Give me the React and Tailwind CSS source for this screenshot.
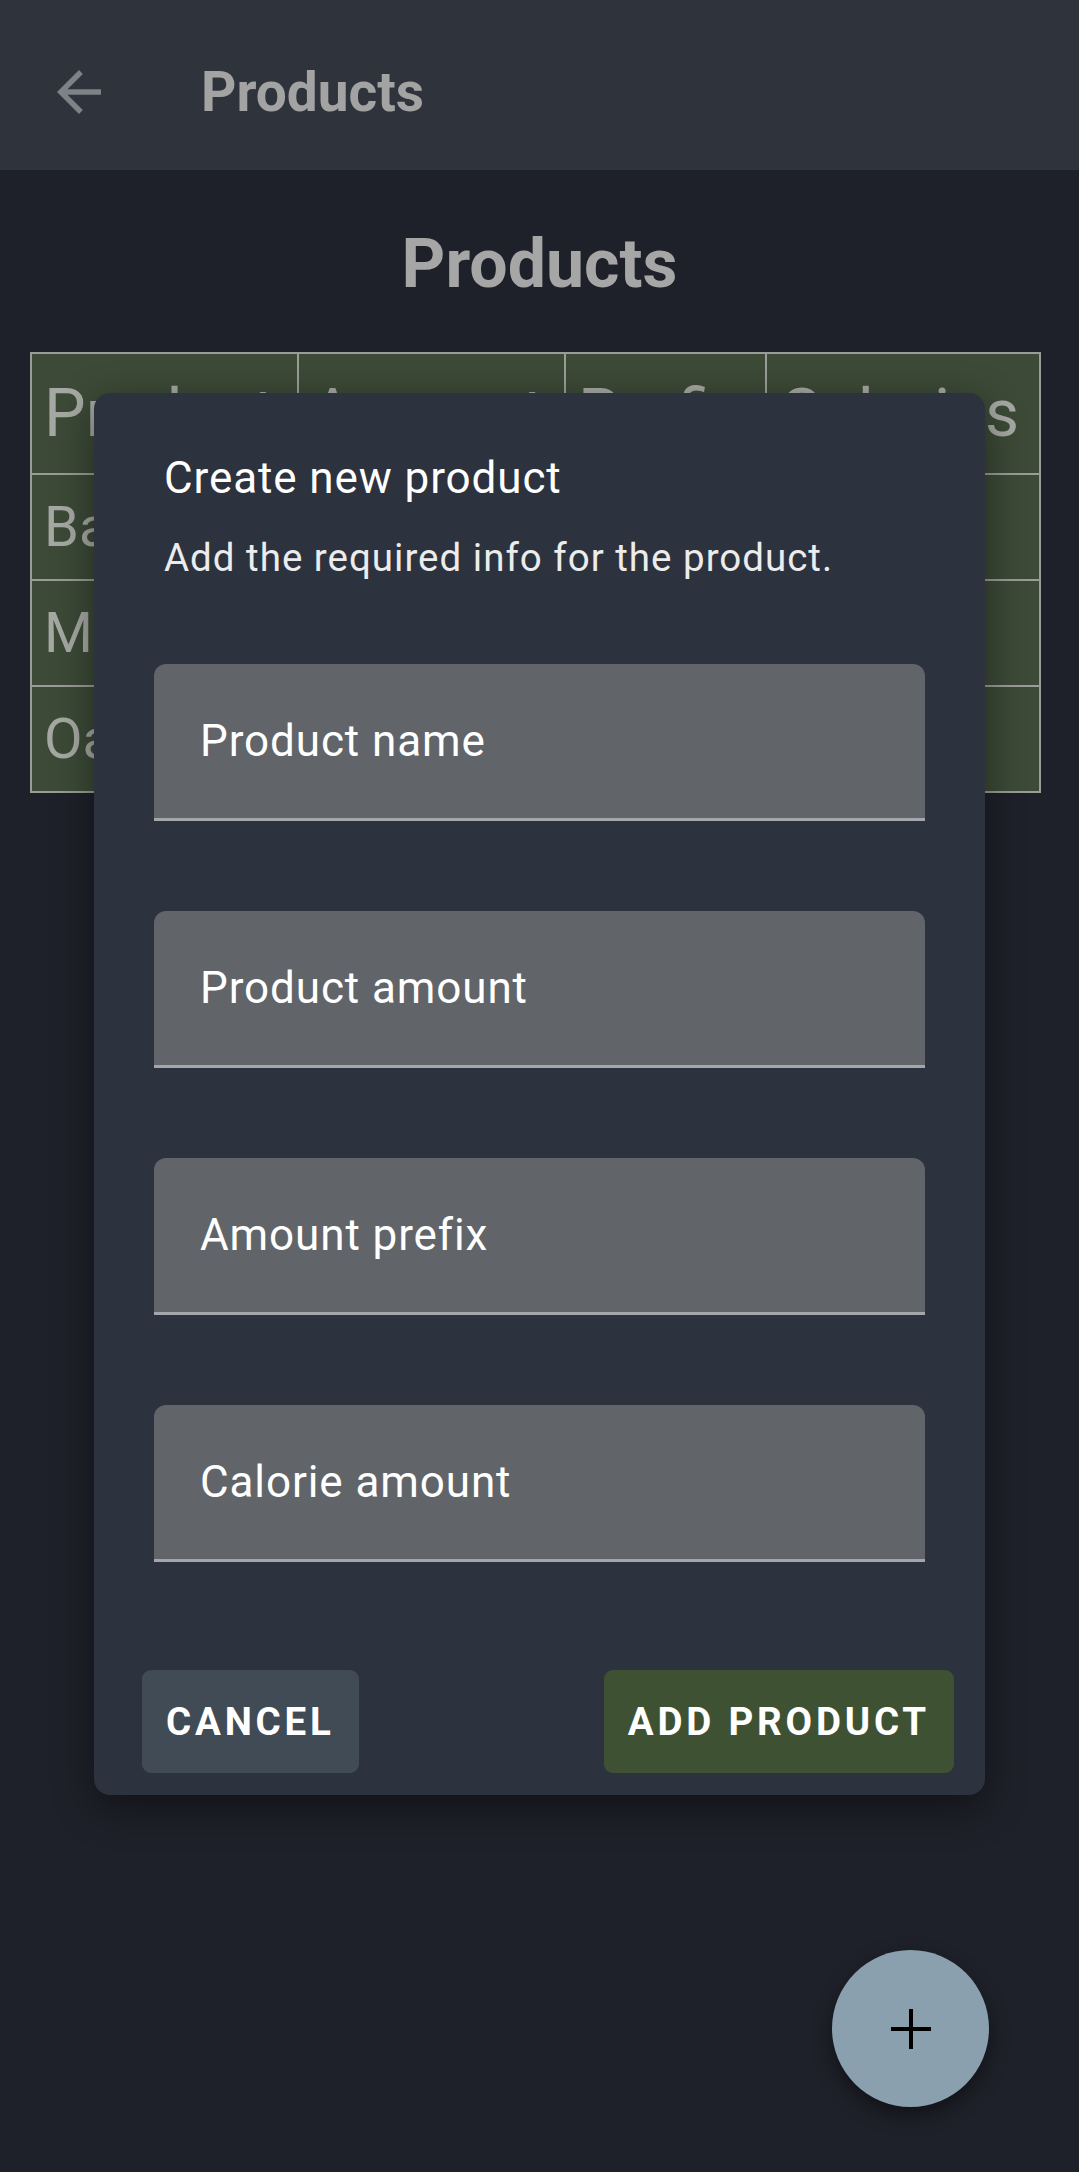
import React from 'react'

const columns = [
  { label: 'Product', width: 'w-[267px]' },
  { label: 'Amount', width: 'w-[267px]' },
  { label: 'Prefix', width: 'w-[201px]' },
  { label: 'Calories', width: 'w-[274px]' },
]

const products = [
  ['Banana', '100', 'g', '89'],
  ['Milk', '100', 'ml', '42'],
  ['Oats', '100', 'g', '389'],
]

const fields = ['Product name', 'Product amount', 'Amount prefix', 'Calorie amount']

function TextField({ label }) {
  return (
    <div className="h-[157px] w-full bg-[#616569] rounded-t-[12px] border-b-[3px] border-[#a3a6aa] flex items-center pl-[46px]">
      <span className="text-[44px] leading-[52px] tracking-[0.9px] text-white">{label}</span>
    </div>
  )
}

export default function App() {
  return (
    <div className="relative w-[1079px] h-[2172px] overflow-hidden bg-[#1f212a] font-['Roboto',sans-serif]">
      {/* Toolbar */}
      <div className="h-[170px] bg-[#2f333b] flex items-center pt-[14px]">
        <svg viewBox="0 0 24 24" className="ml-[46px] w-[66px] h-[66px]" fill="#7e8185">
          <path d="M20 11H7.83l5.59-5.59L12 4l-8 8 8 8 1.41-1.41L7.83 13H20v-2z" />
        </svg>
        <h1 className="ml-[89px] text-[55px] leading-[66px] font-bold text-[#a3a3a3]">Products</h1>
      </div>

      <h2 className="mt-[52px] text-center text-[68px] leading-[84px] font-bold text-[#a6a6a6]">Products</h2>

      {/* Products table */}
      <div className="mt-[46px] mx-[30px]">
        <table className="table-fixed border-collapse w-[1009px] bg-[#3c4a37] text-[#a6a8a3]">
          <thead>
            <tr className="h-[121px]">
              {columns.map(c => (
                <th key={c.label} className={`${c.width} border-2 border-[#9a9d97] px-[12px] text-left font-normal text-[66px] whitespace-nowrap overflow-hidden`}>
                  {c.label}
                </th>
              ))}
            </tr>
          </thead>
          <tbody>
            {products.map(row => (
              <tr key={row[0]} className="h-[106px]">
                {row.map((cell, i) => (
                  <td key={i} className="border-2 border-[#9a9d97] px-[12px] text-[56px] whitespace-nowrap overflow-hidden">
                    {cell}
                  </td>
                ))}
              </tr>
            ))}
          </tbody>
        </table>
      </div>

      {/* Dialog */}
      <div className="absolute left-[94px] top-[393px] w-[891px] h-[1402px] bg-[#2d323f] rounded-[16px] shadow-[0_12px_40px_rgba(0,0,0,0.45)] flex flex-col">
        <div className="pt-[59px] pl-[70px]">
          <div className="text-[44px] leading-[53px] tracking-[0.9px] text-white">Create new product</div>
          <div className="mt-[30px] text-[38.5px] leading-[46px] tracking-[1px] text-[#ececec]">
            Add the required info for the product.
          </div>
        </div>

        <div className="mt-[83px] mx-[60px] flex flex-col gap-[90px]">
          {fields.map(f => <TextField key={f} label={f} />)}
        </div>

        <div className="mt-[108px] pl-[48px] pr-[31px] flex justify-between">
          <button className="h-[103px] px-[24px] rounded-[9px] bg-[#414b55] text-white text-[38.5px] font-bold tracking-[3.8px]">
            CANCEL
          </button>
          <button className="h-[103px] px-[24px] rounded-[9px] bg-[#3e5233] text-white text-[38.5px] font-bold tracking-[3.8px]">
            ADD PRODUCT
          </button>
        </div>
      </div>

      {/* FAB */}
      <button className="absolute left-[832px] top-[1950px] w-[157px] h-[157px] rounded-full bg-[#8aa0af] shadow-[0_8px_20px_rgba(0,0,0,0.45)] flex items-center justify-center">
        <svg viewBox="0 0 40 40" className="w-[40px] h-[40px]">
          <path d="M20 0v40M0 20h40" stroke="black" strokeWidth="4" />
        </svg>
      </button>
    </div>
  )
}
